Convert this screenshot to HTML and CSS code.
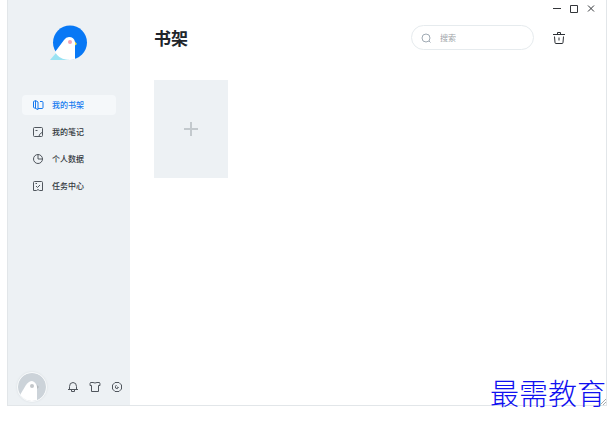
FILE: index.html
```html
<!DOCTYPE html>
<html lang="zh-CN">
<head>
    <meta charset="UTF-8">
    <meta name="viewport" content="width=device-width, initial-scale=1.0">
    <title>书架</title>
    <link rel="stylesheet" href="styles.css">
</head>
<body>
    <div class="window">
        <aside class="sidebar">
            <svg class="logo" viewBox="0 0 38 36" aria-hidden="true">
                <circle cx="20" cy="17.5" r="17" fill="#0878f5"/>
                <path d="M0 35 L6 28 L18 34 L18 35 Z" fill="#9be3f3"/>
                <path d="M5 27 L14 15 Q16 12 19 12 Q24 12 25 17 V34 Q21 35.5 16 34.5 Q9 34 5 27 Z" fill="#fff"/>
                <path d="M25 16.5 L27 19 L25 20.5 Z" fill="#f0df45"/>
                <circle cx="20" cy="17" r="2" fill="#f4a3b3"/>
            </svg>
            <nav class="menu">
                <a class="menu-item active" href="#">
                    <svg class="icon" viewBox="0 0 12 12" aria-hidden="true">
                        <path d="M3.5 2 H2.5 Q1.5 2 1.5 3 V8 Q1.5 9 2.5 9 H3.5"/>
                        <path d="M3.5 1.5 L6 3 V10.5 L3.5 9.5 Z"/>
                        <path d="M8 2.5 H10 Q11 2.5 11 3.5 V8.5 Q11 9.5 10 9.5 H6"/>
                    </svg>
                    <span>我的书架</span>
                </a>
                <a class="menu-item" href="#">
                    <svg class="icon" viewBox="0 0 12 12" aria-hidden="true">
                        <path d="M7 10.5 H2.5 Q1.5 10.5 1.5 9.5 V2.5 Q1.5 1.5 2.5 1.5 H9.5 Q10.5 1.5 10.5 2.5 V6"/>
                        <path d="M3.5 4.5 H5.5 M7 10.5 L7.5 8.5 L10.5 6 V9.5 Q10.5 10.5 9.5 10.5 Z"/>
                    </svg>
                    <span>我的笔记</span>
                </a>
                <a class="menu-item" href="#">
                    <svg class="icon" viewBox="0 0 12 12" aria-hidden="true">
                        <circle cx="6" cy="6" r="4.5"/>
                        <path d="M6 1.5 V6 H10.5"/>
                    </svg>
                    <span>个人数据</span>
                </a>
                <a class="menu-item" href="#">
                    <svg class="icon" viewBox="0 0 12 12" aria-hidden="true">
                        <path d="M2.5 1.5 H9.5 Q10.5 1.5 10.5 2.5 V10.5 H7.5 L6 9.5 L4.5 10.5 H1.5 V2.5 Q1.5 1.5 2.5 1.5 Z"/>
                        <path d="M4 6 L5.5 7.5 L8 5 M3.5 3.5 H5"/>
                    </svg>
                    <span>任务中心</span>
                </a>
            </nav>
            <div class="user-bar">
                <button class="avatar" type="button" aria-label="头像">
                    <svg viewBox="0 0 28 28" aria-hidden="true">
                        <circle cx="14" cy="14" r="14" fill="#ccd3d9"/>
                        <path d="M2 22 L8 12 Q11 8 14 8 Q18 9 19 14 V27 Q14 29 8 27 Q4 25 2 22 Z" fill="#fff"/>
                        <circle cx="14" cy="13" r="2" fill="#c3c7ca"/>
                        <path d="M19 12 L21 14 L19 16 Z" fill="#b3b9bd"/>
                    </svg>
                </button>
                <button class="icon-button" type="button" aria-label="通知">
                    <svg class="icon" viewBox="0 0 12 12" aria-hidden="true">
                        <path d="M1 8.5 H11 M2.5 8.5 V5.5 Q2.5 1.5 6 1.5 Q9.5 1.5 9.5 5.5 V8.5 M4.5 8.5 V10.5 H7.5 V8.5"/>
                    </svg>
                </button>
                <button class="icon-button" type="button" aria-label="皮肤">
                    <svg class="icon" viewBox="0 0 12 12" aria-hidden="true">
                        <path d="M4 1.5 Q6 2.5 8 1.5 H10.5 Q11 1.5 11 4.5 H9.5 V10.5 H2.5 V4.5 H1 Q1 1.5 1.5 1.5 Z"/>
                    </svg>
                </button>
                <button class="icon-button" type="button" aria-label="设置">
                    <svg class="icon" viewBox="0 0 12 12" aria-hidden="true">
                        <path d="M4 1.5 H8 L10.5 4 V8 L8 10.5 H4 L1.5 8 V4 Z"/>
                        <path d="M5.5 4 Q4 5 4.5 7 Q6.5 8.5 7.5 6.5 L6 6"/>
                    </svg>
                </button>
            </div>
        </aside>
        <main class="content">
            <div class="title-bar">
                <button class="icon-button" type="button" aria-label="最小化">
                    <svg class="icon dark" viewBox="0 0 12 12" aria-hidden="true"><path d="M2 6.5 H10"/></svg>
                </button>
                <button class="icon-button" type="button" aria-label="最大化">
                    <svg class="icon dark" viewBox="0 0 12 12" aria-hidden="true"><path d="M2.5 3.5 H9.5 V10.5 H2.5 Z"/></svg>
                </button>
                <button class="icon-button" type="button" aria-label="关闭">
                    <svg class="icon dark" viewBox="0 0 12 12" aria-hidden="true"><path d="M3 3.5 L9 9.5 M9 3.5 L3 9.5"/></svg>
                </button>
            </div>
            <header class="header">
                <h1>书架</h1>
                <label class="search">
                    <svg class="icon" viewBox="0 0 12 12" aria-hidden="true">
                        <circle cx="6" cy="6" r="4"/>
                        <path d="M9 9 L10.5 10.5"/>
                    </svg>
                    <input type="text" class="search-input" aria-label="搜索" placeholder="搜索">
                </label>
                <button class="icon-button trash" type="button" aria-label="删除">
                    <svg viewBox="0 0 14 14" aria-hidden="true">
                        <path d="M1 3.5 H13 M5.5 3 V1.5 H8.5 V3 M2.5 5.5 L3 11.5 Q3 12.5 4 12.5 H10 Q11 12.5 11 11.5 L11.5 5.5 M7 6.5 V9.5"/>
                    </svg>
                </button>
            </header>
            <section class="books">
                <button class="add-book" type="button" aria-label="添加书籍">
                    <svg viewBox="0 0 16 16" aria-hidden="true"><path d="M8 1 V15 M1 8 H15"/></svg>
                </button>
            </section>
        </main>
        <span class="watermark">最需教育</span>
        <svg class="grip" viewBox="0 0 6 6" aria-hidden="true"><path d="M0 6 L6 0 M3 6 L6 3"/></svg>
    </div>
</body>
</html>
```

FILE: styles.css
```css
* {
    box-sizing: border-box;
}

body {
    margin: 0;
    padding: 0 5px 19px 7px;
    min-height: 100vh;
    display: flex;
    font-family: "Noto Sans CJK SC", sans-serif;
    font-size: 8px;
    color: #32373d;
    background-color: #fff;
}

.window {
    position: relative;
    flex: 1;
    display: flex;
    border: 1px solid #e2e6e9;
    border-top: none;
}

button {
    padding: 0;
    border: none;
    background: none;
    cursor: pointer;
}

svg {
    display: block;
    fill: none;
}

.icon {
    width: 12px;
    height: 12px;
    stroke: #50565d;
}

.icon.dark {
    stroke: #33363a;
}

.sidebar {
    display: flex;
    flex-direction: column;
    width: 122px;
    padding-top: 25px;
    background-color: #edf1f4;
}

.logo {
    width: 38px;
    height: 36px;
    margin-left: 42px;
}

.menu {
    display: flex;
    flex-direction: column;
    gap: 7px;
    margin: 34px 14px 0;
}

.menu-item {
    display: flex;
    align-items: center;
    gap: 8px;
    height: 20px;
    padding-left: 10px;
    border-radius: 4px;
    color: #32373d;
    font-weight: 500;
    line-height: 10px;
    text-decoration: none;
}

.menu-item.active {
    color: #1478f0;
    background-color: #f5f8fa;
}

.menu-item.active .icon {
    stroke: #1478f0;
}

.user-bar {
    display: flex;
    align-items: center;
    gap: 10px;
    margin-top: auto;
    padding: 0 7px 3px 9px;
}

.avatar {
    width: 30px;
    height: 30px;
    margin-right: auto;
    border: 1px solid #f8fafb;
    border-radius: 50%;
    overflow: hidden;
    box-shadow: 0 0 2px #d5dade;
}

.content {
    flex: 1;
    min-width: 0;
}

.title-bar {
    display: flex;
    justify-content: flex-end;
    gap: 5px;
    padding: 2px 9px 0 0;
}

.header {
    display: flex;
    align-items: center;
    padding: 11px 40px 0 24px;
}

h1 {
    flex: 1;
    margin: 0;
    font-size: 17px;
    line-height: 25px;
    color: #20252b;
}

.search {
    display: flex;
    align-items: center;
    gap: 8px;
    width: 123px;
    height: 25px;
    padding: 0 8px;
    border: 1px solid #e6ebee;
    border-radius: 13px;
}

.search .icon {
    stroke: #a0aab4;
}

.search-input {
    flex: 1;
    min-width: 0;
    padding: 0;
    border: none;
    outline: none;
    background: none;
    font: inherit;
}

.search-input::placeholder {
    color: #a0a4a8;
}

.trash {
    width: 14px;
    height: 14px;
    margin-left: 18px;
}

.trash svg {
    stroke: #2c3035;
}

.books {
    display: flex;
    padding: 30px 24px;
}

.add-book {
    display: flex;
    align-items: center;
    justify-content: center;
    width: 74px;
    height: 98px;
    background-color: #edf1f4;
}

.add-book svg {
    width: 16px;
    height: 16px;
    stroke: #c3c9cd;
    stroke-width: 2;
}

.watermark {
    position: absolute;
    right: 0;
    bottom: -4px;
    font-family: KaiTi, STKaiti, "Noto Sans CJK SC", serif;
    font-size: 29px;
    font-weight: 300;
    line-height: 34px;
    color: #1010f0;
}

.grip {
    position: absolute;
    right: 0;
    bottom: 0;
    width: 6px;
    height: 6px;
    stroke: #a5a9ad;
}
```
